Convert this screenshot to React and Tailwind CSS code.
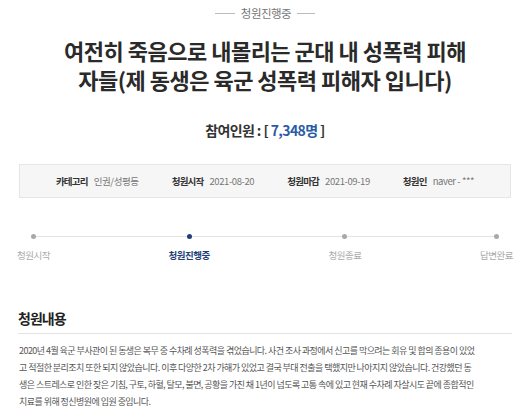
export default function App() {
    const info = [
        { label: "카테고리", value: "인권/성평등" },
        { label: "청원시작", value: "2021-08-20" },
        { label: "청원마감", value: "2021-09-19" },
        { label: "청원인", value: "naver - ***" },
    ];

    const steps = [
        { name: "청원시작", active: false },
        { name: "청원진행중", active: true },
        { name: "청원종료", active: false },
        { name: "답변완료", active: false },
    ];

    return (
        <div className="w-[530px] h-[412px] overflow-hidden bg-white font-['Noto_Sans_CJK_KR','Noto_Sans',sans-serif] text-[#333]">
            {/* status */}
            <div className="pt-[5px] flex justify-center items-center gap-[6px] text-[11.5px] leading-[16px] tracking-[-0.5px] text-[#777]">
                <span className="w-[20px] h-px bg-[#bbb]"></span>
                <span>청원진행중</span>
                <span className="w-[18px] h-px bg-[#bbb]"></span>
            </div>

            <h1 className="mt-[14.5px] text-center text-[22px] leading-[29px] font-bold tracking-[-0.5px] text-[#2a2a2a]">
                여전히 죽음으로 내몰리는 군대 내 성폭력 피해
                <br />
                자들(제 동생은 육군 성폭력 피해자 입니다)
            </h1>

            <p className="mt-[26.5px] text-center text-[14px] leading-[20px] font-bold tracking-[-0.6px]">
                참여인원 : [ <span className="text-[#2b5ba7]">7,348명</span> ]
            </p>

            {/* info box */}
            <div className="mt-[24px] mx-[19px] h-[34px] bg-[#f6f6f6] border border-[#e6e6e6] flex justify-center items-center gap-[33px] text-[9.5px]">
                {info.map((item) => (
                    <div key={item.label} className="flex items-center gap-[6px]">
                        <span className="font-bold text-[#333] tracking-[-0.8px]">{item.label}</span>
                        <span className="text-[#777] tracking-[-0.4px]">{item.value}</span>
                    </div>
                ))}
            </div>

            {/* progress */}
            <div className="relative mt-[35.5px] mx-[17px] flex justify-between">
                <div className="absolute left-[18px] right-[16px] top-[2px] h-px bg-[#e3e3e3]"></div>
                {steps.map((step) => (
                    <div key={step.name} className="relative flex flex-col items-center">
                        <span className={`w-[5px] h-[5px] rounded-full ${step.active ? "bg-[#1f3f7a]" : "bg-[#a8a8a8]"}`}></span>
                        <span className={`mt-[9.5px] text-[9.5px] leading-[14px] tracking-[-0.5px] ${step.active ? "text-[#1f3f7a] font-semibold" : "text-[#aaa]"}`}>
                            {step.name}
                        </span>
                    </div>
                ))}
            </div>

            {/* content */}
            <div className="mt-[46px] mx-[18px]">
                <h2 className="text-[14px] leading-[20px] font-bold tracking-[-1px] text-[#222] pb-[5px] border-b border-[#e3e3e3]">
                    청원내용
                </h2>
                <p className="mt-[7.5px] pl-px text-[9px] leading-[17.3px] tracking-[-0.55px] text-[#555]">
                    2020년 4월 육군 부사관이 된 동생은 복무 중 수차례 성폭력을 겪었습니다. 사건 조사 과정에서 신고를 막으려는 회유 및 합의 종용이 있었
                    <br />
                    고 적절한 분리조치 또한 되지 않았습니다. 이후 다양한 2차 가해가 있었고 결국 부대 전출을 택했지만 나아지지 않았습니다. 건강했던 동
                    <br />
                    생은 스트레스로 인한 잦은 기침, 구토, 하혈, 탈모, 불면, 공황을 가진 채 1년이 넘도록 고통 속에 있고 현재 수차례 자살시도 끝에 종합적인
                    <br />
                    치료를 위해 정신병원에 입원 중입니다.
                </p>
            </div>
        </div>
    );
}
